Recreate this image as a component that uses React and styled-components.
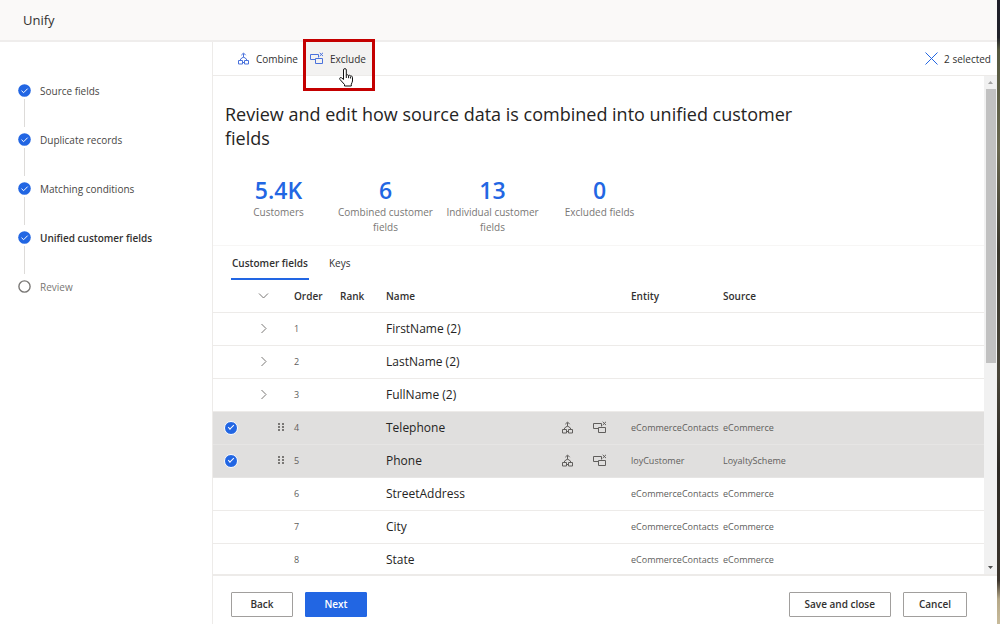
import React, { useState } from "react";
import styled, { createGlobalStyle } from "styled-components";

const GlobalStyle = createGlobalStyle`
  *, *::before, *::after { box-sizing: border-box; }
  body {
    margin: 0;
    background: #fff;
    color: #323130;
    font-family: "Open Sans", "Noto Sans", sans-serif;
    font-size: 10px;
    line-height: 16px;
  }
  button, input { font: inherit; color: inherit; }
`;

const BLUE = "#2266e3";
const ICON_BLUE = "#4a72dc";
const LINE = "#edebe9";

const Desktop = styled.div`
  display: flex;
  height: 100vh;
  overflow: hidden;
`;

const Wallpaper = styled.div`
  flex: none;
  width: 3px;
  background: linear-gradient(
    #1e1e28 0, #20222a 6%, #55583f 8%, #6a6850 24%, #3a372c 40%,
    #4a463a 60%, #2c2924 75%, #3b342c 93%, #b5a888 96%, #c8bb9b 100%
  );
`;

const Window = styled.div`
  flex: 1;
  min-width: 0;
  display: flex;
  flex-direction: column;
`;

const TitleBar = styled.header`
  flex: none;
  height: 42px;
  padding: 0 23px;
  display: flex;
  align-items: center;
  background: #faf9f8;
  border-bottom: 2px solid #efedec;
`;

const Title = styled.h1`
  margin: 0;
  font-size: 13px;
  font-weight: 500;
  line-height: 20px;
`;

const Body = styled.div`
  flex: 1;
  min-height: 0;
  display: flex;
`;

const Sidebar = styled.nav`
  flex: none;
  width: 213px;
  padding: 40px 18px;
  border-right: 1px solid ${LINE};
`;

const Steps = styled.ol`
  margin: 0;
  padding: 0;
  list-style: none;
`;

const Step = styled.li`
  height: 49px;
  display: grid;
  grid-template-columns: 13px 1fr;
  grid-template-rows: 17px 28px;
  column-gap: 9px;
  align-items: center;
  color: ${(p) => (p.$current ? "#323130" : p.$done ? "#484644" : "#797775")};
  font-weight: ${(p) => (p.$current ? 600 : 400)};

  &:not(:last-child)::after {
    content: "";
    justify-self: center;
    width: 1px;
    height: 28px;
    background: #dddbd9;
  }
`;

const Main = styled.main`
  flex: 1;
  min-width: 0;
  display: flex;
  flex-direction: column;
`;

const Toolbar = styled.div`
  flex: none;
  height: 34px;
  padding: 0 6px 0 18px;
  display: flex;
  align-items: stretch;
  border-bottom: 1px solid ${LINE};
`;

const Command = styled.button`
  position: relative;
  display: flex;
  align-items: center;
  gap: 6px;
  padding: 0 6px;
  border: 0;
  background: ${(p) => (p.$hot ? "#f3f2f1" : "transparent")};
  color: #323130;
  white-space: nowrap;
`;

const ClearSelection = styled(Command)`
  margin-left: auto;
  padding: 0;
`;

const Highlight = styled.span`
  position: absolute;
  inset: -3px -3px -16px -1px;
  border: 3px solid #c40000;
  pointer-events: none;
`;

const HandPointer = styled.svg`
  position: absolute;
  left: 35px;
  top: 26px;
`;

const ScrollArea = styled.div`
  flex: 1;
  min-height: 0;
  display: flex;
  overflow: hidden;
`;

const Content = styled.div`
  flex: 1;
  min-width: 0;
  overflow: hidden;
`;

const ScrollTrack = styled.div`
  flex: none;
  width: 13px;
  display: flex;
  flex-direction: column;
  align-items: center;
  background: #f1f1f1;
`;

const ScrollArrow = styled.svg`
  flex: none;
  display: block;
`;

const ScrollThumb = styled.div`
  width: 10px;
  flex: 0 0 55%;
  margin-bottom: auto;
  background: #c1c1c1;
`;

const Heading = styled.h2`
  margin: 0;
  max-width: 600px;
  padding: 26px 0 0 12px;
  color: #252423;
  font-size: 18px;
  font-weight: 500;
  line-height: 24px;
`;

const Metrics = styled.dl`
  margin: 0;
  padding: 25px 0 10px 12px;
  display: flex;
  border-bottom: 1px solid #f7f6f5;
`;

const Metric = styled.div`
  width: 107px;
  display: flex;
  flex-direction: column-reverse;
  justify-content: flex-end;
  text-align: center;
`;

const MetricLabel = styled.dt`
  padding: 0 4px;
  color: #797775;
  line-height: 15px;
`;

const MetricValue = styled.dd`
  margin: 0;
  color: ${BLUE};
  font-size: 23px;
  font-weight: 600;
  line-height: 30px;
`;

const Tabs = styled.div`
  display: flex;
  gap: 19px;
  padding-left: 18px;
`;

const Tab = styled.button`
  height: 34px;
  padding: 2px 1px 0;
  border: 0;
  border-bottom: 2px solid ${(p) => (p.$active ? BLUE : "transparent")};
  background: none;
  font-weight: ${(p) => (p.$active ? 600 : 400)};
  white-space: nowrap;
`;

const Table = styled.table`
  width: 100%;
  table-layout: fixed;
  border-collapse: collapse;
`;

const Col = styled.col`
  width: ${(p) => (p.$w ? `${p.$w}px` : "auto")};
`;

const HeadCell = styled.th`
  height: 32px;
  padding: 0;
  border-bottom: 1px solid ${LINE};
  text-align: left;
  font-weight: 600;
`;

const Row = styled.tr`
  background: ${(p) => (p.$selected ? "#e0dfde" : "#fff")};
`;

const Cell = styled.td`
  height: 33px;
  padding: 0;
  border-bottom: 1px solid ${LINE};
  color: #605e5c;
  font-size: 9px;
  white-space: nowrap;
  ${Row}[aria-selected="true"] & { border-bottom-color: #e6e5e4; }
`;

const NameCell = styled(Cell)`
  font-size: 12px;
  font-weight: 500;
  color: #252423;
`;

const CellTools = styled.div`
  display: flex;
  align-items: center;
  justify-content: ${(p) => (p.$end ? "flex-end" : "flex-start")};
  gap: ${(p) => p.$gap || 0}px;
  padding: 0 ${(p) => (p.$end ? 10 : 0)}px 0 ${(p) => p.$inset || 0}px;
`;

const IconButton = styled.button`
  display: flex;
  padding: 0;
  border: 0;
  background: none;
  color: #605e5c;
`;

const RoundCheck = styled.input`
  appearance: none;
  display: grid;
  place-items: center;
  width: 14px;
  height: 14px;
  margin: 0 0 0 11px;
  border: 1px solid #fff;
  border-radius: 50%;
  background: ${BLUE};

  &::after {
    content: "";
    width: 6px;
    height: 3px;
    margin-bottom: 2px;
    border: solid #fff;
    border-width: 0 0 1px 1px;
    rotate: -45deg;
  }
`;

const Footer = styled.footer`
  flex: none;
  height: 50px;
  padding: 16px 30px 0 18px;
  display: flex;
  gap: 12px;
  border-top: 2px solid ${LINE};
`;

const Button = styled.button`
  height: 25px;
  min-width: 62px;
  padding: 0 15px 1px;
  border: 1px solid ${(p) => (p.$primary ? BLUE : "#a19f9d")};
  border-radius: 1px;
  background: ${(p) => (p.$primary ? BLUE : "#fff")};
  color: ${(p) => (p.$primary ? "#fff" : "#323130")};
  font-weight: 600;
  white-space: nowrap;
`;

const Spacer = styled.span`
  flex: 1;
`;

const StepIcon = ({ done }) => (
  <svg width="13" height="13" viewBox="0 0 13 13" aria-hidden="true">
    {done ? (
      <>
        <circle cx="6.5" cy="6.5" r="6.3" fill={BLUE} />
        <path d="M3.5 6.7 5.6 8.7 9.7 4.6" fill="none" stroke="#fff" />
      </>
    ) : (
      <circle cx="6.5" cy="6.5" r="5.6" fill="#fff" stroke="#797775" strokeWidth="1.4" />
    )}
  </svg>
);

const CombineIcon = ({ color = "currentColor" }) => (
  <svg width="13" height="13" viewBox="0 0 13 13" fill="none" stroke={color} aria-hidden="true">
    <path d="M1.500 8.500h4v3.500h-4zM7.500 8.500h4v3.500h-4zM3.500 8.500V7l3-2 3 2v1.500M5.500 10.500h2M6.500 5.500V1.500M4.300 3.200 6.500 1l2.200 2.200" />
  </svg>
);

const ExcludeIcon = ({ color = "currentColor" }) => (
  <svg width="14" height="13" viewBox="0 0 14 13" fill="none" stroke={color} aria-hidden="true">
    <path d="M8.500 5.500v-3h-8v5h4.500M5.500 6.500h7v5h-7z" />
    <path d="m9.700.8 3.300 3.300M13 .8 9.700 4.100" />
  </svg>
);

const Chevron = ({ down }) => (
  <svg width="11" height="11" viewBox="0 0 11 11" fill="none" stroke="#797775" aria-hidden="true">
    <path d={down ? "M1 3.500 5.500 8 10 3.500" : "M3.500 1 8 5.500 3.500 10"} />
  </svg>
);

const DragDots = () => (
  <svg width="6" height="9" viewBox="0 0 6 9" fill="#797775" aria-hidden="true">
    {[0, 3, 6].map((y) => (
      <path key={y} d={`M0 ${y}h2v2h-2zM4 ${y}h2v2h-2z`} />
    ))}
  </svg>
);

const steps = ["Source fields", "Duplicate records", "Matching conditions", "Unified customer fields", "Review"];

const metrics = [
  ["5.4K", "Customers"],
  ["6", "Combined customer fields"],
  ["13", "Individual customer fields"],
  ["0", "Excluded fields"],
];

const rows = [
  { name: "FirstName (2)", group: true },
  { name: "LastName (2)", group: true },
  { name: "FullName (2)", group: true },
  { name: "Telephone", selected: true, entity: "eCommerceContacts", source: "eCommerce" },
  { name: "Phone", selected: true, entity: "loyCustomer", source: "LoyaltyScheme" },
  { name: "StreetAddress", entity: "eCommerceContacts", source: "eCommerce" },
  { name: "City", entity: "eCommerceContacts", source: "eCommerce" },
  { name: "State", entity: "eCommerceContacts", source: "eCommerce" },
];

export default function App() {
  const [tab, setTab] = useState("Customer fields");

  return (
    <Desktop>
      <GlobalStyle />
      <Window>
        <TitleBar>
          <Title>Unify</Title>
        </TitleBar>
        <Body>
          <Sidebar aria-label="Steps">
            <Steps>
              {steps.map((s, i) => (
                <Step key={s} $done={i < 4} $current={i === 3}>
                  <StepIcon done={i < 4} />
                  <span>{s}</span>
                </Step>
              ))}
            </Steps>
          </Sidebar>
          <Main>
            <Toolbar>
              <Command>
                <CombineIcon color={ICON_BLUE} />
                Combine
              </Command>
              <Command $hot>
                <ExcludeIcon color={ICON_BLUE} />
                Exclude
                <Highlight />
                <HandPointer width="14" height="19" viewBox="0 0 14 19" aria-hidden="true">
                  <path
                    d="M4.500 11.500V2a1.400 1.400 0 0 1 2.800 0v5.500c.3-1 2-1 2.300.3.500-.9 2-.6 2.100.5.800-.5 1.800 0 1.800 1v3.700c0 1.200-.9 2-1.200 3.200v1.800H5.500v-1.500L1 11.500c-1-1.500.5-2.600 1.700-1.600z"
                    fill="#fff"
                    stroke="#111"
                  />
                  <path d="M7.300 7.500V10M9.600 8v2.200M11.600 8.800v1.700" stroke="#111" fill="none" />
                </HandPointer>
              </Command>
              <ClearSelection>
                <svg width="13" height="13" viewBox="0 0 13 13" stroke={BLUE} aria-hidden="true">
                  <path d="m.5.5 12 12M12.500.5l-12 12" />
                </svg>
                2 selected
              </ClearSelection>
            </Toolbar>
            <ScrollArea>
              <Content>
                <Heading>Review and edit how source data is combined into unified customer fields</Heading>
                <Metrics>
                  {metrics.map(([value, label]) => (
                    <Metric key={label}>
                      <MetricLabel>{label}</MetricLabel>
                      <MetricValue>{value}</MetricValue>
                    </Metric>
                  ))}
                </Metrics>
                <Tabs role="tablist">
                  {["Customer fields", "Keys"].map((t) => (
                    <Tab key={t} role="tab" aria-selected={tab === t} $active={tab === t} onClick={() => setTab(t)}>
                      {t}
                    </Tab>
                  ))}
                </Tabs>
                <Table>
                  <colgroup>
                    {[36, 45, 46, 46, 175, 70, 92, 0].map((w, i) => (
                      <Col key={i} $w={w} />
                    ))}
                  </colgroup>
                  <thead>
                    <tr>
                      <HeadCell />
                      <HeadCell>
                        <CellTools $inset={9}>
                          <Chevron down />
                        </CellTools>
                      </HeadCell>
                      <HeadCell>Order</HeadCell>
                      <HeadCell>Rank</HeadCell>
                      <HeadCell>Name</HeadCell>
                      <HeadCell />
                      <HeadCell>Entity</HeadCell>
                      <HeadCell>Source</HeadCell>
                    </tr>
                  </thead>
                  <tbody>
                    {rows.map((r, i) => (
                      <Row key={r.name} $selected={r.selected} aria-selected={!!r.selected}>
                        <Cell>
                          {r.selected && <RoundCheck type="checkbox" defaultChecked aria-label={`Select ${r.name}`} />}
                        </Cell>
                        <Cell>
                          {r.group && (
                            <CellTools $inset={9}>
                              <IconButton aria-label={`Expand ${r.name}`}>
                                <Chevron />
                              </IconButton>
                            </CellTools>
                          )}
                          {r.selected && (
                            <CellTools $end>
                              <DragDots />
                            </CellTools>
                          )}
                        </Cell>
                        <Cell>{i + 1}</Cell>
                        <Cell />
                        <NameCell>{r.name}</NameCell>
                        <Cell>
                          {r.selected && (
                            <CellTools $gap={19}>
                              <IconButton aria-label={`Combine ${r.name}`}>
                                <CombineIcon />
                              </IconButton>
                              <IconButton aria-label={`Exclude ${r.name}`}>
                                <ExcludeIcon />
                              </IconButton>
                            </CellTools>
                          )}
                        </Cell>
                        <Cell>{r.entity}</Cell>
                        <Cell>{r.source}</Cell>
                      </Row>
                    ))}
                  </tbody>
                </Table>
              </Content>
              <ScrollTrack aria-hidden="true">
                <ScrollArrow width="13" height="13" viewBox="0 0 13 13">
                  <path d="M4 8h5L6.500 5z" fill="#a3a3a3" />
                </ScrollArrow>
                <ScrollThumb />
                <ScrollArrow width="13" height="13" viewBox="0 0 13 13">
                  <path d="M4 5h5L6.500 8z" fill="#505050" />
                </ScrollArrow>
              </ScrollTrack>
            </ScrollArea>
            <Footer>
              <Button>Back</Button>
              <Button $primary>Next</Button>
              <Spacer />
              <Button>Save and close</Button>
              <Button>Cancel</Button>
            </Footer>
          </Main>
        </Body>
      </Window>
      <Wallpaper />
    </Desktop>
  );
}
